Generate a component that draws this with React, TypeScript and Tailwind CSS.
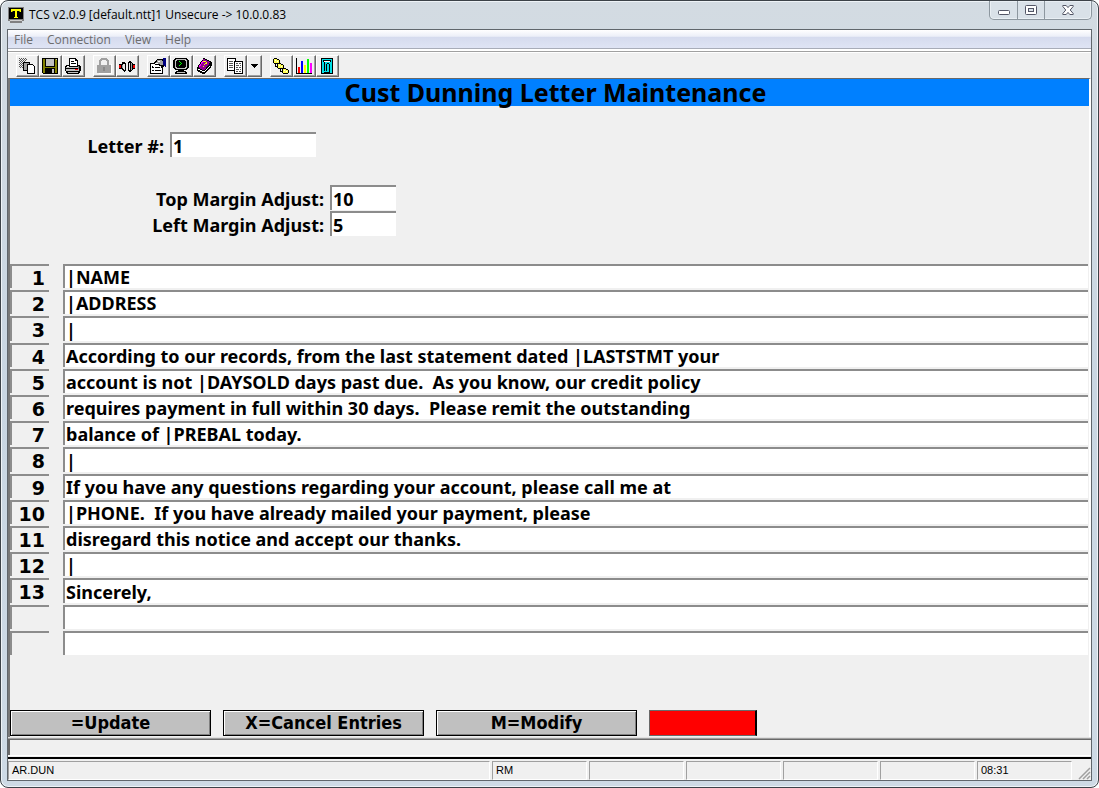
import type { ReactNode } from "react";

const lines = [
  "|NAME",
  "|ADDRESS",
  "|",
  "According to our records, from the last statement dated |LASTSTMT your",
  "account is not |DAYSOLD days past due.  As you know, our credit policy",
  "requires payment in full within 30 days.  Please remit the outstanding",
  "balance of |PREBAL today.",
  "|",
  "If you have any questions regarding your account, please call me at",
  "|PHONE.  If you have already mailed your payment, please",
  "disregard this notice and accept our thanks.",
  "|",
  "Sincerely,",
  "",
  "",
];

function Icon({ children }: { children: ReactNode }) {
  return (
    <svg viewBox="0 0 16 16" className="block h-4 w-4 shrink-0" shapeRendering="crispEdges" aria-hidden="true">
      {children}
    </svg>
  );
}

const icons = {
  copy: (
    <Icon>
      <path fill="#555" d="M0 0h1v1h-1zM2 0h1v1h-1zM4 0h1v1h-1zM6 0h1v1h-1zM1 1h1v1h-1zM3 1h1v1h-1zM5 1h1v1h-1zM7 1h1v1h-1zM0 2h1v1h-1zM2 2h1v1h-1zM4 2h1v1h-1zM6 2h1v1h-1zM1 3h1v1h-1zM3 3h1v1h-1zM5 3h1v1h-1zM0 4h1v1h-1zM2 4h1v1h-1zM1 5h1v1h-1zM3 5h1v1h-1zM0 6h1v1h-1zM2 6h1v1h-1zM1 7h1v1h-1zM3 7h1v1h-1zM0 8h1v1h-1zM2 8h1v1h-1zM1 9h1v1h-1zM3 9h1v1h-1z" />
      <path fill="#000" d="M4 4h7v9h-7z" />
      <path fill="#a0a0a0" d="M5 5h5v7h-5z" />
      <path fill="#000" d="M8 6h6v1h1v1h1v8h-8z" />
      <path fill="#fff" d="M9 7h5v1h1v7h-6z" />
    </Icon>
  ),
  save: (
    <Icon>
      <path fill="#000" d="M0 0h16v16h-15v-1h-1z" />
      <path fill="#808000" d="M1 1h14v14h-14z" />
      <path fill="#000" d="M3 1h10v8h-10z" />
      <path fill="#c0c0c0" d="M4 1h8v7h-8z" />
      <path fill="#000" d="M3 10h10v5h-10z" />
      <path fill="#c0c0c0" d="M10 11h2v4h-2zM14 1h1v1h-1z" />
    </Icon>
  ),
  print: (
    <Icon>
      <path fill="#000" d="M4 0h7v1h1v1h1v5h2v1h1v5h-1v2h-1v1h-12v-1h-1v-2h-1v-5h1v-1h3z" />
      <path fill="#fff" d="M5 1h5v2h2v5h-7zM2 8h2v1h-2z" />
      <path fill="#000" d="M6 3h3v1h-3zM6 5h5v1h-5z" />
      <path fill="#c0c0c0" d="M1 9h12v1h-12zM1 11h13v2h-13zM3 14h10v1h-10z" />
      <path fill="#808080" d="M13 8h1v3h-1z" />
      <path fill="#f00" d="M10 11h3v1h-3z" />
    </Icon>
  ),
  lock: (
    <Icon>
      <path fill="#fff" d="M3 15h12v-9h1v10h-13z" />
      <path fill="#a0a0a0" d="M5 0h6v1h1v1h1v5h2v8h-14v-8h2v-5h1v-1h1z" />
      <path fill="#f0f0f0" d="M6 2h4v1h1v4h-6v-4h1z" />
      <path fill="#888" d="M7 9h2v4h-2z" />
    </Icon>
  ),
  connect: (
    <Icon>
      <path fill="#000" d="M0 6h2v5h-2zM3 4h3v1h1v8h-1v1h-1v-1h-1v-1h-1v-1h-1v-5h1zM10 3h2v1h1v1h1v7h-1v1h-1v1h-2v-1h-1v-9h1zM14 6h2v5h-2z" />
      <path fill="#e00" d="M0 7h2v3h-2zM14 7h2v3h-2z" />
      <path fill="#e8e8e8" d="M4 6h2v6h-1v-1h-1zM10 5h1v7h-1z" />
      <path fill="#a0a0a0" d="M3 7h1v3h-1zM12 5h1v7h-1z" />
    </Icon>
  ),
  properties: (
    <Icon>
      <path fill="#000" d="M0 5h13v11h-13z" />
      <path fill="#fff" d="M1 6h11v9h-11z" />
      <path fill="#000" d="M2 8h1v1h1v1h-2zM5 9h5v1h-5zM2 12h2v1h-2zM5 12h6v1h-6z" />
      <path fill="#000" d="M7 1h6v1h1v7h-2v1h-1v-2h-2v-1h-4v-1h-1v-2h1v-1h1v-1h1z" />
      <path fill="#a0a0a0" d="M7 2h5v1h1v4h-3v-1h-4v-2h1z" />
      <path fill="#fff" d="M5 5h3v1h-3zM8 3h2v1h-2z" />
      <path fill="#000080" d="M13 0h3v9h-1v-1h-1v-1h-1z" />
    </Icon>
  ),
  terminal: (
    <Icon>
      <path fill="#000" d="M2 0h12v1h1v1h1v8h-1v1h-1v1h-3v1h2v1h1v2h-12v-2h1v-1h2v-1h-3v-1h-1v-1h-1v-8h1v-1h1z" />
      <path fill="#c0c0c0" d="M3 1h10v1h1v8h-1v1h-10v-1h-1v-8h1zM4 14h8v1h-8z" />
      <path fill="#000" d="M4 2h8v1h1v6h-1v1h-8v-1h-1v-6h1z" />
      <path fill="#0f0" d="M6 3h1v1h1v1h1v1h-1v1h-1v1h-1v-1h1v-1h1v-1h-1v-1h-1z" />
    </Icon>
  ),
  help: (
    <Icon>
      <path fill="#000" d="M7 0h2v1h2v1h2v1h2v1h1v4h-1v2h-1v1h-1v1h-1v1h-1v1h-1v1h-1v1h-3v-1h-2v-1h-2v-1h-1v-4h1v-2h1v-1h1v-2h1v-1h1v-1h1z" />
      <path fill="#900090" d="M7 1h2v1h2v1h2v1h1v1h-1v2h-1v1h-1v1h-1v2h-1v1h-3v-1h-2v-1h-1v-1h1v-2h1v-1h1v-2h1z" />
      <path fill="#ff00ff" d="M6 3h1v2h-1v1h-1v2h-1v1h-1v-2h1v-1h1v-2h1z" />
      <path fill="#fff" d="M2 11h2v1h2v1h3v-1h1v-1h1v-1h1v-1h1v-1h1v1h-1v1h-1v1h-1v1h-1v1h-1v1h-3v-1h-2v-1h-2z" />
      <path fill="#ff0" d="M7 3h3v1h1v2h-2v1h-1v-1h1v-1h1v-1h-3zM7 8h1v1h-1z" />
    </Icon>
  ),
  documents: (
    <Icon>
      <path fill="#000" d="M0 0h9v3h7v13h-9v-3h-7z" />
      <path fill="#fff" d="M1 1h7v2h-1v9h-6zM8 4h7v11h-7z" />
      <path fill="#555" d="M2 3h4v1h-4zM2 5h4v1h-4zM2 7h4v1h-4zM2 9h4v1h-4zM9 5h2v1h-2zM12 5h2v1h-2zM9 7h3v1h-3zM13 7h1v1h-1zM9 9h2v1h-2zM12 9h2v1h-2zM9 11h3v1h-3zM13 11h1v1h-1zM9 13h2v1h-2zM12 13h2v1h-2z" />
    </Icon>
  ),
  network: (
    <Icon>
      <path fill="#000" d="M1 0h3v1h2v1h1v3h-1v1h-5v-1h-1v-4h1zM5 5h3v1h2v1h1v3h-1v1h-5v-1h-1v-4h1zM10 10h3v1h2v1h1v3h-1v1h-5v-1h-1v-4h1zM2 6h1v2h1v1h-2zM7 11h1v2h1v1h-2z" />
      <path fill="#ffff50" d="M1 1h3v1h2v3h-5zM5 6h3v1h2v3h-5zM10 11h3v1h2v3h-5z" />
      <path fill="#fff" d="M2 2h1v1h-1zM4 3h1v1h-1zM6 7h1v1h-1zM8 8h1v1h-1zM11 12h1v1h-1zM13 13h1v1h-1z" />
    </Icon>
  ),
  chart: (
    <Icon>
      <path fill="#000" d="M0 0h1v15h15v1h-16z" />
      <path fill="#f00" d="M2 9h2v6h-2z" />
      <path fill="#00f" d="M5 3h2v12h-2z" />
      <path fill="#ff0" d="M8 7h2v8h-2z" />
      <path fill="#0f0" d="M11 1h2v14h-2z" />
      <path fill="#f0f" d="M14 5h2v10h-2z" />
    </Icon>
  ),
  panel: (
    <Icon>
      <path fill="#000" d="M2 0h12v16h-12z" />
      <path fill="#00e0e8" d="M3 1h10v14h-10z" />
      <path fill="#000" d="M4 2h8v2h-8zM5 4h1v9h-1zM7 6h1v7h-1zM8 5h2v1h-2zM10 6h1v8h-1zM5 14h6v1h-6z" />
      <path fill="#fff" d="M5 3h6v1h-6z" />
    </Icon>
  ),
};

const toolGroups: { label: string; icon: ReactNode }[][] = [
  [
    { label: "Copy", icon: icons.copy },
    { label: "Save", icon: icons.save },
    { label: "Print", icon: icons.print },
  ],
  [
    { label: "Secure", icon: icons.lock },
    { label: "Connect", icon: icons.connect },
  ],
  [
    { label: "Properties", icon: icons.properties },
    { label: "Terminal", icon: icons.terminal },
    { label: "Help topics", icon: icons.help },
  ],
  [{ label: "Documents", icon: icons.documents }],
  [
    { label: "Network", icon: icons.network },
    { label: "Chart", icon: icons.chart },
    { label: "Panel", icon: icons.panel },
  ],
];

const raised =
  "flex h-[22px] items-center justify-center border border-t-white border-l-white border-r-[#696969] border-b-[#696969] bg-[#f0f0f0] pr-px shadow-[inset_-1px_-1px_0_#a0a0a0]";

function Toolbar() {
  return (
    <div role="toolbar" className="flex h-[26px] items-center gap-2 border-t border-white bg-[#f0f0f0] pl-2">
      {toolGroups.map((group, g) => (
        <div key={g} className="flex">
          {group.map((t) => (
            <button key={t.label} type="button" aria-label={t.label} className={`${raised} w-[23px]`}>
              {t.icon}
            </button>
          ))}
          {g === 3 && (
            <button type="button" aria-label="More documents" className={`${raised} w-[15px]`}>
              <svg viewBox="0 0 7 4" className="h-1 w-[7px]" shapeRendering="crispEdges" aria-hidden="true">
                <path d="M0 0h7v1h-1v1h-1v1h-1v1h-1v-1h-1v-1h-1v-1h-1z" />
              </svg>
            </button>
          )}
        </div>
      ))}
    </div>
  );
}

function TitleBar() {
  return (
    <header className="flex h-7 items-start justify-between pl-[7px]">
      <div className="flex h-7 items-center gap-[5px]">
        <svg viewBox="0 0 16 16" className="h-4 w-4" aria-hidden="true">
          <path fill="#808080" d="M0 0h16v14h-2v2h-12v-2h-2z" />
          <path fill="#000" d="M1 1h14v11h-14z" />
          <path fill="#ff0" d="M3 2h10v3h-1l-1-1h-2v6h1v1h-4v-1h1v-6h-2l-1 1h-1z" />
          <path fill="#d0d0d0" d="M2 13h12v1h-12z" />
        </svg>
        <h1 className="text-xs text-black">TCS v2.0.9 [default.ntt]1 Unsecure -&gt; 10.0.0.83</h1>
      </div>
      <div className="mr-[6px] flex h-[19px] rounded-b-[5px] border border-t-0 border-[#8d979f] bg-[#d9e1e8] shadow-[inset_0_0_0_1px_#e9eff4]">
        <button type="button" aria-label="Minimize" className="flex w-7 items-center justify-center border-r border-[#8d979f]">
          <svg viewBox="0 0 12 5" className="mt-[5px] h-[5px] w-3" aria-hidden="true">
            <rect x=".5" y=".5" width="11" height="4" rx="1" fill="#fff" stroke="#535666" />
          </svg>
        </button>
        <button type="button" aria-label="Maximize" className="flex w-[27px] items-center justify-center border-r border-[#8d979f]">
          <svg viewBox="0 0 12 10" className="h-[10px] w-3" aria-hidden="true">
            <rect x=".5" y=".5" width="11" height="9" rx="1" fill="#fff" stroke="#535666" />
            <rect x="3.5" y="3.5" width="5" height="3" fill="#d9e1e8" stroke="#535666" />
          </svg>
        </button>
        <button type="button" aria-label="Close" className="flex w-[46px] items-center justify-center">
          <svg viewBox="0 0 12 10" className="h-[10px] w-3" aria-hidden="true">
            <path
              d="M.8.5h3.4L6 2.6 7.800.5h3.400v1L8.200 5l3 3.500v1H7.800L6 7.400 4.200 9.500H.8v-1l3-3.500-3-3.500z"
              fill="#fff"
              stroke="#535666"
            />
          </svg>
        </button>
      </div>
    </header>
  );
}

const field =
  "block min-w-0 border-t-2 border-l-2 border-[#8c8c8c] bg-white pl-px font-bold text-lg leading-none text-black outline-none";

function Field({ id, label, value, width, labelWidth }: { id: string; label: string; value: string; width: string; labelWidth: string }) {
  return (
    <div className="flex h-[26px] items-start gap-[6px]">
      <label htmlFor={id} className={`${labelWidth} pt-[2px] text-right text-lg leading-6 font-bold whitespace-nowrap`}>
        {label}
      </label>
      <input id={id} defaultValue={value} className={`${field} ${width} h-[25px]`} />
    </div>
  );
}

function ActionButton({ children }: { children: ReactNode }) {
  return (
    <button
      type="button"
      className="flex h-[26px] w-[201px] items-center justify-center border border-black bg-[#c0c0c0] font-['DejaVu_Sans_Condensed',sans-serif] text-lg leading-none font-bold shadow-[inset_1px_1px_0_#fff,inset_-1px_-1px_0_#808080]"
    >
      {children}
    </button>
  );
}

const statusCell = "h-[19px] border border-t-[#a0a0a0] border-l-[#a0a0a0] border-r-white border-b-white pl-[3px] leading-[17px]";

export default function App() {
  return (
    <div className="flex min-h-screen flex-col rounded-lg border border-[#3c4248] bg-[linear-gradient(#d3dbe2,#c9d6e2_50%,#cedae5)] px-[6px] pb-[6px] font-['Noto_Sans',sans-serif] text-black shadow-[inset_0_0_0_1px_#eef3f7]">
      <div className="-mx-[6px] font-['Open_Sans',sans-serif]">
        <TitleBar />
      </div>
      <div className="flex flex-1 flex-col border border-[#60666c] bg-[#f0f0f0]">
        <nav className="flex h-[19px] items-center gap-[14px] border-b border-[#a8acb8] bg-[linear-gradient(#fff,#eceff8_35%,#d5dbee_40%,#dfe4f4)] pt-[2px] pl-[6px] font-['Open_Sans',sans-serif] text-xs text-[#6d6d6d]">
          {["File", "Connection", "View", "Help"].map((m) => (
            <button key={m} type="button">
              {m}
            </button>
          ))}
        </nav>
        <div className="h-[3px] border-b border-[#a0a0a0] bg-white" />
        <Toolbar />
        <main className="flex flex-1 flex-col border-t border-l-2 border-r-2 border-t-[#696969] border-l-[#787878] border-r-white">
          <h2 className="flex h-[27px] items-center justify-center bg-[#0080ff] pl-3 text-center text-[25px] leading-none font-bold">
            Cust Dunning Letter Maintenance
          </h2>

          <form className="flex flex-1 flex-col">
            <div className="flex flex-col items-start pt-[26px]">
              <Field id="letter" label="Letter #:" value="1" width="w-[146px]" labelWidth="w-[154px]" />
              <div className="mt-[27px]">
                <Field id="top-margin" label="Top Margin Adjust:" value="10" width="w-[66px]" labelWidth="w-[314px]" />
                <Field id="left-margin" label="Left Margin Adjust:" value="5" width="w-[66px]" labelWidth="w-[314px]" />
              </div>
            </div>

            <div className="mt-[27px] flex h-[393px] flex-col pr-px">
              {lines.map((text, i) => (
                <div key={i} className="flex min-h-0 flex-1">
                  <label
                    htmlFor={`line-${i}`}
                    className="mr-[14px] mb-[2px] w-[39px] border-t-2 border-l-2 border-[#8c8c8c] pr-1 text-right font-['DejaVu_Sans',sans-serif] text-[19px] leading-6 font-bold"
                  >
                    {text ? i + 1 : ""}
                  </label>
                  <input id={`line-${i}`} aria-label={`Line ${i + 1}`} defaultValue={text} className={`${field} mb-[2px] flex-1`} />
                </div>
              ))}
            </div>

            <div className="mt-auto flex gap-3 pb-px">
              <ActionButton>=Update</ActionButton>
              <ActionButton>X=Cancel Entries</ActionButton>
              <ActionButton>M=Modify</ActionButton>
              <div className="h-[26px] w-[108px] border border-r-2 border-[#696969] border-r-black bg-[#f00]" />
            </div>
          </form>
        </main>
        <div className="h-[2px] border-t border-[#e0e0e0] bg-[#a0a0a0]" />
        <div className="h-4 border-t border-l-2 border-[#696969]" />
        <div className="h-[4px] border-t border-b-2 border-t-white border-b-black" />
        <footer className="flex h-[21px] items-end gap-[2px] font-['Liberation_Sans',sans-serif] text-[11px]">
          <div className={`${statusCell} flex-1`}>AR.DUN</div>
          <div className={`${statusCell} w-[95px]`}>RM</div>
          <div className={`${statusCell} w-[95px]`} />
          <div className={`${statusCell} w-[95px]`} />
          <div className={`${statusCell} w-[95px]`} />
          <div className={`${statusCell} w-[95px]`} />
          <div className={`${statusCell} w-[95px]`}>08:31</div>
          <svg viewBox="0 0 16 16" className="ml-px h-4 w-4" aria-hidden="true">
            <path d="M4 15L15 4M8 15l7-7M12 15l3-3" stroke="#a0a0a0" strokeWidth="1.500" />
          </svg>
        </footer>
      </div>
    </div>
  );
}
